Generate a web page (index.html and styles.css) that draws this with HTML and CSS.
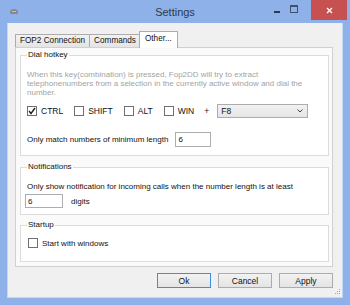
FILE: index.html
```html
<!DOCTYPE html>
<html lang="en">
<head>
  <meta charset="UTF-8" />
  <title>Settings</title>
  <link rel="stylesheet" href="styles.css">
</head>
<body>
  <div class="window">
    <div class="titlebar">
      <div class="app-icon">
        <svg width="10" height="7" viewBox="0 0 10 7">
          <path d="M1 4 Q1 1 5 1 Q9 1 9 4 L9 5 Q9 6 8 6 L2 6 Q1 6 1 5 Z" fill="#8a8a8a"/>
          <rect x="3" y="3" width="4" height="1" fill="#bdbdbd"/>
        </svg>
      </div>
      <div class="title">Settings</div>
      <div class="controls">
        <span class="ctl min"></span>
        <span class="ctl max"></span>
        <span class="ctl close">
          <svg width="7" height="7" viewBox="0 0 7 7"><path d="M1 1 L6 6 M6 1 L1 6" stroke="#fff" stroke-width="1.4"/></svg>
        </span>
      </div>
    </div>

    <div class="client">
      <div class="tabs">
        <div class="tab">FOP2 Connection</div>
        <div class="tab">Commands</div>
        <div class="tab active">Other...</div>
      </div>

      <div class="panel">
        <fieldset class="group dial">
          <legend>Dial hotkey</legend>
          <p class="hint">When this key(combination) is pressed, Fop2DD will try to extract telephonenumbers from a selection in the currently active window and dial the number.</p>
          <div class="keys">
            <label class="check"><span class="box checked">
              <svg width="8" height="8" viewBox="0 0 8 8"><path d="M1 4 L3 6.5 L7 1" fill="none" stroke="#222" stroke-width="1.4"/></svg>
            </span>CTRL</label>
            <label class="check"><span class="box"></span>SHIFT</label>
            <label class="check"><span class="box"></span>ALT</label>
            <label class="check"><span class="box"></span>WIN</label>
            <span class="plus">+</span>
            <div class="select">
              <span>F8</span>
              <svg width="6" height="4" viewBox="0 0 6 4"><path d="M0.5 0.5 L3 3 L5.5 0.5" fill="none" stroke="#444" stroke-width="1"/></svg>
            </div>
          </div>
          <div class="row minlen">
            <span>Only match numbers of minimum length</span>
            <div class="input">6</div>
          </div>
        </fieldset>

        <fieldset class="group notify">
          <legend>Notifications</legend>
          <p>Only show notification for incoming calls when the number length is at least</p>
          <div class="row">
            <div class="input">6</div>
            <span>digits</span>
          </div>
        </fieldset>

        <fieldset class="group startup">
          <legend>Startup</legend>
          <label class="check"><span class="box"></span>Start with windows</label>
        </fieldset>
      </div>

      <div class="buttons">
        <button class="btn default">Ok</button>
        <button class="btn">Cancel</button>
        <button class="btn">Apply</button>
      </div>

      <div class="grip">
        <svg width="7" height="7" viewBox="0 0 7 7" fill="#a8a8a8">
          <rect x="5" y="0" width="1" height="1"/>
          <rect x="3" y="2" width="1" height="1"/><rect x="5" y="2" width="1" height="1"/>
          <rect x="1" y="4" width="1" height="1"/><rect x="3" y="4" width="1" height="1"/><rect x="5" y="4" width="1" height="1"/>
        </svg>
      </div>
    </div>
  </div>
</body>
</html>
```

FILE: styles.css
```css
body {
  margin: 0;
  width: 350px;
  height: 305px;
  overflow: hidden;
  background: #8db1e8;
  font-family: 'Liberation Sans', Arial, sans-serif;
  font-size: 8px;
  color: #111;
}

.window {
  height: 305px;
  display: flex;
  flex-direction: column;
}

/* Title bar */
.titlebar {
  height: 23px;
  display: grid;
  grid-template-columns: 1fr auto 1fr;
  align-items: start;
}

.app-icon {
  padding: 8px 0 0 9px;
}

.title {
  font-size: 11px;
  color: #2f3b4a;
  padding-top: 6px;
}

.controls {
  display: flex;
  justify-content: flex-end;
  padding-right: 3px;
}

.ctl {
  width: 20px;
  height: 20px;
  position: relative;
}

.min::after {
  content: "";
  position: absolute;
  left: 9px;
  top: 11px;
  width: 6px;
  height: 2px;
  background: #2c3a4d;
}

.max::after {
  content: "";
  position: absolute;
  left: 5px;
  top: 5px;
  width: 6px;
  height: 5px;
  border: 1px solid #3e526e;
  border-top-width: 2px;
}

.close {
  width: 36px;
  background: #c75050;
  display: flex;
  align-items: center;
  justify-content: center;
  margin-left: 6px;
}

/* Client area */
.client {
  flex: 1;
  margin: 0 7px 7px;
  background: #f0f0f0;
  border: 1px solid #c6d7f1;
  border-top: none;
  padding: 9px 9px 0 7px;
  display: flex;
  flex-direction: column;
  position: relative;
}

.tabs {
  display: flex;
  align-items: flex-end;
  height: 15px;
}

.tab {
  height: 13px;
  line-height: 12px;
  padding: 0 4px;
  border: 1px solid #acacac;
  border-bottom: none;
  margin-right: -1px;
  background: linear-gradient(#f2f2f2, #e4e4e4);
  font-size: 8.2px;
  box-sizing: border-box;
}

.tab.active {
  height: 17px;
  line-height: 14px;
  background: #fff;
  margin-bottom: -1px;
  padding: 0 5px;
  position: relative;
  z-index: 2;
  margin-left: -1px;
}

.panel {
  height: 220px;
  box-sizing: border-box;
  border: 1px solid #d0d0d0;
  background: #fafafa;
  padding: 2px 3px 0 4px;
}

/* Group boxes */
.group {
  margin: 0;
  padding: 0 6px;
  border: 1px solid #dcdcdc;
  background: #fff;
  font-size: 8px;
}

.group legend {
  padding: 0 1px;
  line-height: 10px;
}

.group p {
  margin: 0;
}

.hint {
  color: #a3a3a3;
  line-height: 9px;
  padding-top: 10px;
}

.keys {
  display: flex;
  align-items: center;
  margin-top: 7px;
  height: 14px;
  font-size: 8.5px;
}

.check {
  display: flex;
  align-items: center;
  margin-right: 11px;
}

.box {
  width: 8px;
  height: 8px;
  border: 1px solid #6f6f6f;
  background: #fff;
  margin-right: 4px;
  display: flex;
  align-items: center;
  justify-content: center;
}

.plus {
  margin: 0 8px 0 -1px;
}

.select {
  width: 91px;
  height: 14px;
  box-sizing: border-box;
  border: 1px solid #acacac;
  background: linear-gradient(#f2f2f2, #e5e5e5);
  display: flex;
  align-items: center;
  justify-content: space-between;
  padding: 0 4px 0 3px;
}

.row {
  display: flex;
  align-items: center;
  gap: 7px;
}

.minlen {
  margin-top: 14px;
  padding-bottom: 8px;
}

.input {
  width: 36px;
  height: 15px;
  box-sizing: border-box;
  border: 1px solid #abadb3;
  background: #fff;
  line-height: 13px;
  padding-left: 2px;
}

.notify {
  margin-top: 6px;
  padding-bottom: 6px;
}

.notify p {
  padding-top: 10px;
  line-height: 10px;
}

.notify .row {
  margin-top: 2px;
  margin-left: -2px;
}

.notify .input {
  width: 38px;
  height: 14px;
  margin-right: 1px;
}

.startup {
  margin-top: 5px;
  padding-top: 8px;
  padding-bottom: 13px;
}

.startup .check {
  margin-left: 1px;
}

/* Buttons */
.buttons {
  display: flex;
  justify-content: flex-end;
  gap: 7px;
  margin-top: 6px;
}

.btn {
  width: 54px;
  height: 15px;
  padding: 0;
  border: 1px solid #acacac;
  background: linear-gradient(#f2f2f2, #e4e4e4);
  font-family: inherit;
  font-size: 8.5px;
  color: #111;
}

.btn.default {
  border-color: #3c8ee0;
}

.grip {
  position: absolute;
  right: 1px;
  bottom: 1px;
  line-height: 0;
}
```
